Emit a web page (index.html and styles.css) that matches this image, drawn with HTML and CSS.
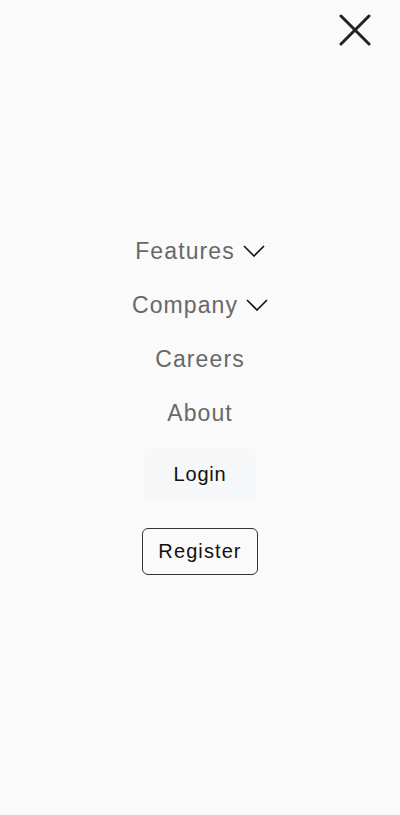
FILE: index.html
```html
<!DOCTYPE html>
<html lang="en">
<head>
<meta charset="utf-8">
<link rel="stylesheet" href="styles.css">
</head>
<body>
<div class="page">
  <header class="topbar">
    <button class="close" aria-label="Close">
      <svg width="32" height="32" viewBox="0 0 32 32"><path d="M2 2 L30 30 M30 2 L2 30" stroke="#222" stroke-width="3" stroke-linecap="round" fill="none"/></svg>
    </button>
  </header>
  <nav class="menu">
    <a class="item">Features <svg class="chev" width="22" height="12" viewBox="0 0 22 12"><path d="M1 1 L11 11 L21 1" stroke="#111" stroke-width="1.6" fill="none"/></svg></a>
    <a class="item">Company <svg class="chev" width="22" height="12" viewBox="0 0 22 12"><path d="M1 1 L11 11 L21 1" stroke="#111" stroke-width="1.6" fill="none"/></svg></a>
    <a class="item">Careers</a>
    <a class="item">About</a>
    <a class="login">Login</a>
    <a class="register">Register</a>
  </nav>
</div>
</body>
</html>
```
FILE: styles.css
```css
* { box-sizing: border-box; }
html, body { margin: 0; padding: 0; background: #fafafa; }
body { font-family: "Liberation Sans", Arial, sans-serif; }
.page { min-height: 815px; display: flex; flex-direction: column; }
.topbar { display: flex; justify-content: flex-end; padding: 14px 29px 0 0; }
.close { background: none; border: 0; padding: 0; width: 32px; height: 32px; display: block; }
.close svg { display: block; }
.menu { display: flex; flex-direction: column; align-items: center; margin-top: 178px; }
.item { display: flex; align-items: center; height: 54px; font-size: 23px; color: #686868; letter-spacing: 1.1px; }
.chev { margin-left: 8px; }
.login { margin-top: 9px; width: 110px; height: 50px; display: flex; align-items: center; justify-content: center; background: #f5f7f9; color: #111; font-size: 20px; letter-spacing: 0.8px; }
.register { margin-top: 29px; width: 116px; height: 47px; display: flex; align-items: center; justify-content: center; border: 1px solid #333; border-radius: 6px; color: #111; font-size: 20px; letter-spacing: 1.1px; }
```
